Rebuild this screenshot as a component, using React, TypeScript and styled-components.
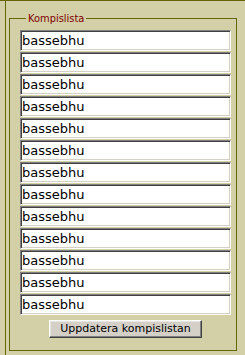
import styled, { createGlobalStyle } from "styled-components";

const GlobalStyle = createGlobalStyle`
  html, body {
    margin: 0;
    padding: 0;
    background: #d3d0a8;
    overflow: hidden;
  }
  body {
    font-family: Verdana, "DejaVu Sans", sans-serif;
    font-size: 11px;
    color: #000000;
  }
`;

const friends = Array.from({ length: 13 }, () => "bassebhu");

export default function App() {
  return (
    <>
      <GlobalStyle />
      <Page>
        <IntroLine>
          <IntroText>Någon lista skriver du bara in deras namn i rutorna nedan</IntroText>
        </IntroLine>
        <Panel>
          <FriendSet>
            <Legend>Kompislista</Legend>
            <FriendList>
              {friends.map((name, i) => (
                <FriendInput key={i} type="text" defaultValue={name} />
              ))}
              <ButtonRow>
                <UpdateButton type="button">Uppdatera kompislistan</UpdateButton>
              </ButtonRow>
            </FriendList>
          </FriendSet>
        </Panel>
      </Page>
    </>
  );
}

const Page = styled.div`
  width: 245px;
  height: 355px;
  overflow: hidden;
  display: flex;
  flex-direction: column;
`;

const IntroLine = styled.div`
  height: 3px;
  overflow: hidden;
  display: flex;
  align-items: flex-end;
  border-bottom: 1px solid #666600;
  padding-left: 3px;
`;

const IntroText = styled.div`
  white-space: nowrap;
  line-height: 11px;
  font-size: 11px;
  flex-shrink: 0;
`;

const Panel = styled.div`
  margin-left: 5px;
  border-left: 1px solid #666600;
  padding: 11px 0 20px 3px;
`;

const FriendSet = styled.fieldset`
  margin: 0;
  width: 228px;
  box-sizing: border-box;
  border: 1px solid #666600;
  padding: 5px 5px 12px 10px;
`;

const Legend = styled.legend`
  margin-left: 6px;
  padding: 0 2px;
  color: #800000;
  font-family: "DejaVu Sans Condensed", "DejaVu Sans", sans-serif;
  font-size: 11px;
  line-height: 13px;
`;

const FriendList = styled.div`
  display: flex;
  flex-direction: column;
  gap: 1px;
`;

const FriendInput = styled.input`
  box-sizing: border-box;
  width: 211px;
  height: 21px;
  margin: 0;
  padding: 0 1px;
  background: #ffffff;
  border: 1px solid;
  border-color: #808080 #ffffff #ffffff #808080;
  box-shadow: inset 1px 1px 0 #404040, inset -1px -1px 0 #d4d0c8;
  font-family: Verdana, "DejaVu Sans", sans-serif;
  font-size: 13px;
  color: #000000;
  outline: none;
`;

const ButtonRow = styled.div`
  width: 211px;
  display: flex;
  justify-content: center;
  margin-top: 4px;
`;

const UpdateButton = styled.button`
  height: 18px;
  padding: 0 10px;
  margin: 0;
  background: #d4d0c8;
  border: 1px solid;
  border-color: #ffffff #404040 #404040 #ffffff;
  box-shadow: inset -1px -1px 0 #808080, inset 1px 1px 0 #e8e6e0;
  font-family: Verdana, "DejaVu Sans", sans-serif;
  font-size: 11px;
  line-height: 14px;
  color: #000000;
`;
